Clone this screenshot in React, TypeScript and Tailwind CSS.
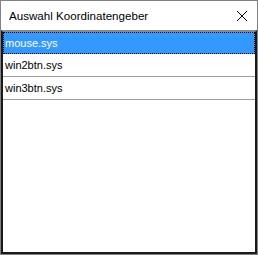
const items = ['mouse.sys', 'win2btn.sys', 'win3btn.sys']

export default function App() {
  return (
    <div className="flex h-[255px] w-[258px] flex-col border border-[#828282] bg-white font-['Liberation_Sans',Arial,sans-serif]">
      <div className="flex h-[29px] shrink-0 items-center justify-between pl-[8px] pr-[9px]">
        <span className="text-[11.6px] text-black">Auswahl Koordinatengeber</span>
        <svg width="12" height="12" viewBox="0 0 12 12" className="mt-[1px] text-black">
          <path d="M1 1 L11 11 M11 1 L1 11" stroke="currentColor" strokeWidth="1" />
        </svg>
      </div>
      <div className="flex-1 border-2 border-t-[#8a8a8a] border-r-[#1a1a1a] border-b-[#1a1a1a] border-l-[#1a1a1a] bg-white">
        {items.map((it, i) => (
          <div
            key={it}
            className={
              i === 0
                ? 'flex h-[22px] items-center border border-dotted border-black bg-[#3399ff] pl-[1px] text-[11px] text-white'
                : 'flex h-[23px] items-center border-b border-[#a0a0a0] pl-[2px] text-[11px] text-black'
            }
          >
            {it}
          </div>
        ))}
      </div>
    </div>
  )
}
